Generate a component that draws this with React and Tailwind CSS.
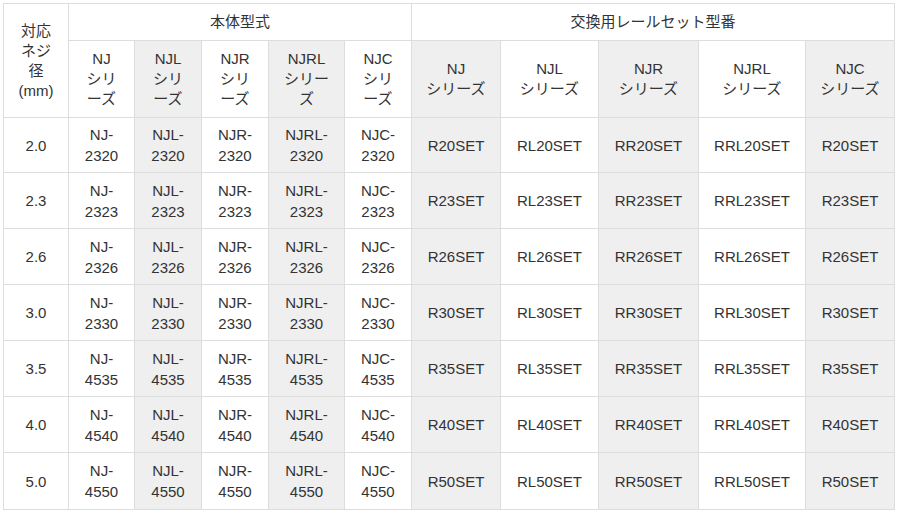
import React from "react";

const sizes = ["2.0", "2.3", "2.6", "3.0", "3.5", "4.0", "5.0"];
const bodyCodes = ["2320", "2323", "2326", "2330", "4535", "4540", "4550"];
const railCodes = ["20", "23", "26", "30", "35", "40", "50"];
const bodyPrefixes = ["NJ", "NJL", "NJR", "NJRL", "NJC"];
const railPrefixes = ["R", "RL", "RR", "RRL", "R"];

const GRAY = "bg-[#efefef]";
const WHITE = "bg-white";

function Cell({ children, className = "", style }) {
  return (
    <div
      className={`flex items-center justify-center text-center ${className}`}
      style={style}
    >
      <div>{children}</div>
    </div>
  );
}

export default function App() {
  const leftBg = [WHITE, GRAY, WHITE, GRAY, WHITE];
  const rightBg = [GRAY, WHITE, GRAY, WHITE, GRAY];
  return (
    <div
      className="w-[900px] h-[511px] bg-white pl-[3px] pt-[3px] text-[15px] text-[#333]"
      style={{ fontFamily: '"Liberation Sans", Arial, "Noto Sans CJK JP", sans-serif' }}
    >
      <div className="grid w-[892px] grid-cols-[64px_65px_66px_66px_75px_66px_88px_97px_99px_106px_88px] grid-rows-[36px_76px_54px_55px_55px_55px_55px_55px_56px] gap-px border border-[#dddddd] bg-[#dddddd]">
        {/* Header row 1 */}
        <Cell className="row-span-2 bg-white leading-[20px]">
          対応<br />ネジ<br />径<br />(mm)
        </Cell>
        <Cell className="col-span-5 bg-white leading-[20px]">本体型式</Cell>
        <Cell className="col-span-5 bg-white leading-[20px]">交換用レールセット型番</Cell>

        {/* Header row 2 */}
        {bodyPrefixes.map((p, i) => (
          <Cell key={"hl" + i} className={`${leftBg[i]} leading-[20px]`}>
            {p}
            <br />
            {p === "NJRL" ? (
              <>
                シリー<br />ズ
              </>
            ) : (
              <>
                シリ<br />ーズ
              </>
            )}
          </Cell>
        ))}
        {bodyPrefixes.map((p, i) => (
          <Cell key={"hr" + i} className={`${rightBg[i]} leading-[20px]`}>
            {p}
            <br />
            シリーズ
          </Cell>
        ))}

        {/* Body rows */}
        {sizes.map((s, r) => (
          <React.Fragment key={s}>
            <Cell className="bg-white leading-[21px]">{s}</Cell>
            {bodyPrefixes.map((p, i) => (
              <Cell key={"b" + i} className={`${leftBg[i]} leading-[21px]`}>
                {p}-
                <br />
                {bodyCodes[r]}
              </Cell>
            ))}
            {railPrefixes.map((p, i) => (
              <Cell key={"r" + i} className={`${rightBg[i]} leading-[21px]`}>
                {p}
                {railCodes[r]}SET
              </Cell>
            ))}
          </React.Fragment>
        ))}
      </div>
    </div>
  );
}
